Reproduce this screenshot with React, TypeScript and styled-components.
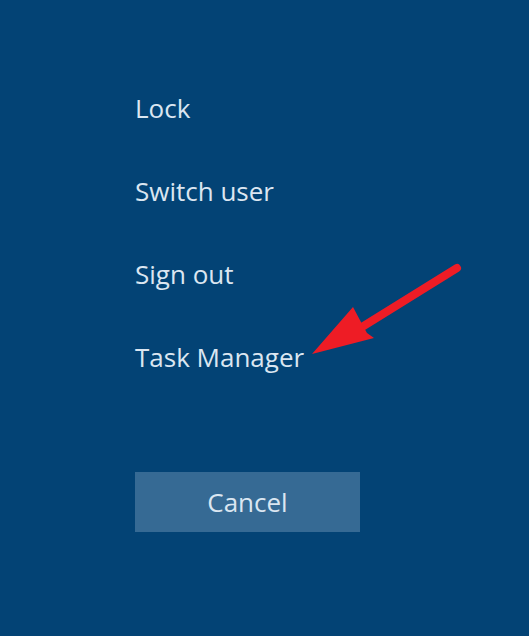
import React from "react";
import styled, { createGlobalStyle } from "styled-components";

const Global = createGlobalStyle`
  html, body { margin: 0; padding: 0; background: #034375; }
  #root { width: 529px; height: 636px; }
`;

const Screen = styled.div`
  position: relative;
  width: 529px;
  height: 636px;
  background: #034375;
  box-sizing: border-box;
  padding: 67px 0 0 135px;
  display: flex;
  flex-direction: column;
  align-items: flex-start;
  font-family: "Segoe UI", "Open Sans", "Noto Sans", sans-serif;
  overflow: hidden;
`;

const Menu = styled.nav`
  display: flex;
  flex-direction: column;
`;

const MenuItem = styled.div`
  height: 83px;
  line-height: 83px;
  font-size: 26px;
  color: #dbe6f1;
  white-space: nowrap;
`;

const CancelButton = styled.button`
  margin-top: 73px;
  width: 225px;
  height: 60px;
  border: none;
  padding: 0;
  background: #366a94;
  color: #dbe6f1;
  font-family: inherit;
  font-size: 26px;
  line-height: 60px;
  text-align: center;
  cursor: pointer;
`;

const Annotation = styled.svg`
  position: absolute;
  left: 0;
  top: 0;
  width: 529px;
  height: 636px;
  pointer-events: none;
`;

export default function App() {
  const items = ["Lock", "Switch user", "Sign out", "Task Manager"];
  return (
    <>
      <Global />
      <Screen>
        <Menu>
          {items.map((t) => (
            <MenuItem key={t}>{t}</MenuItem>
          ))}
        </Menu>
        <CancelButton>Cancel</CancelButton>
        <Annotation viewBox="0 0 529 636">
          <line
            x1="457"
            y1="268"
            x2="362"
            y2="327"
            stroke="#ee1c25"
            strokeWidth="8"
            strokeLinecap="round"
          />
          <polygon
            points="312,354 353,307 362,324 367,333 374,338"
            fill="#ee1c25"
          />
        </Annotation>
      </Screen>
    </>
  );
}
